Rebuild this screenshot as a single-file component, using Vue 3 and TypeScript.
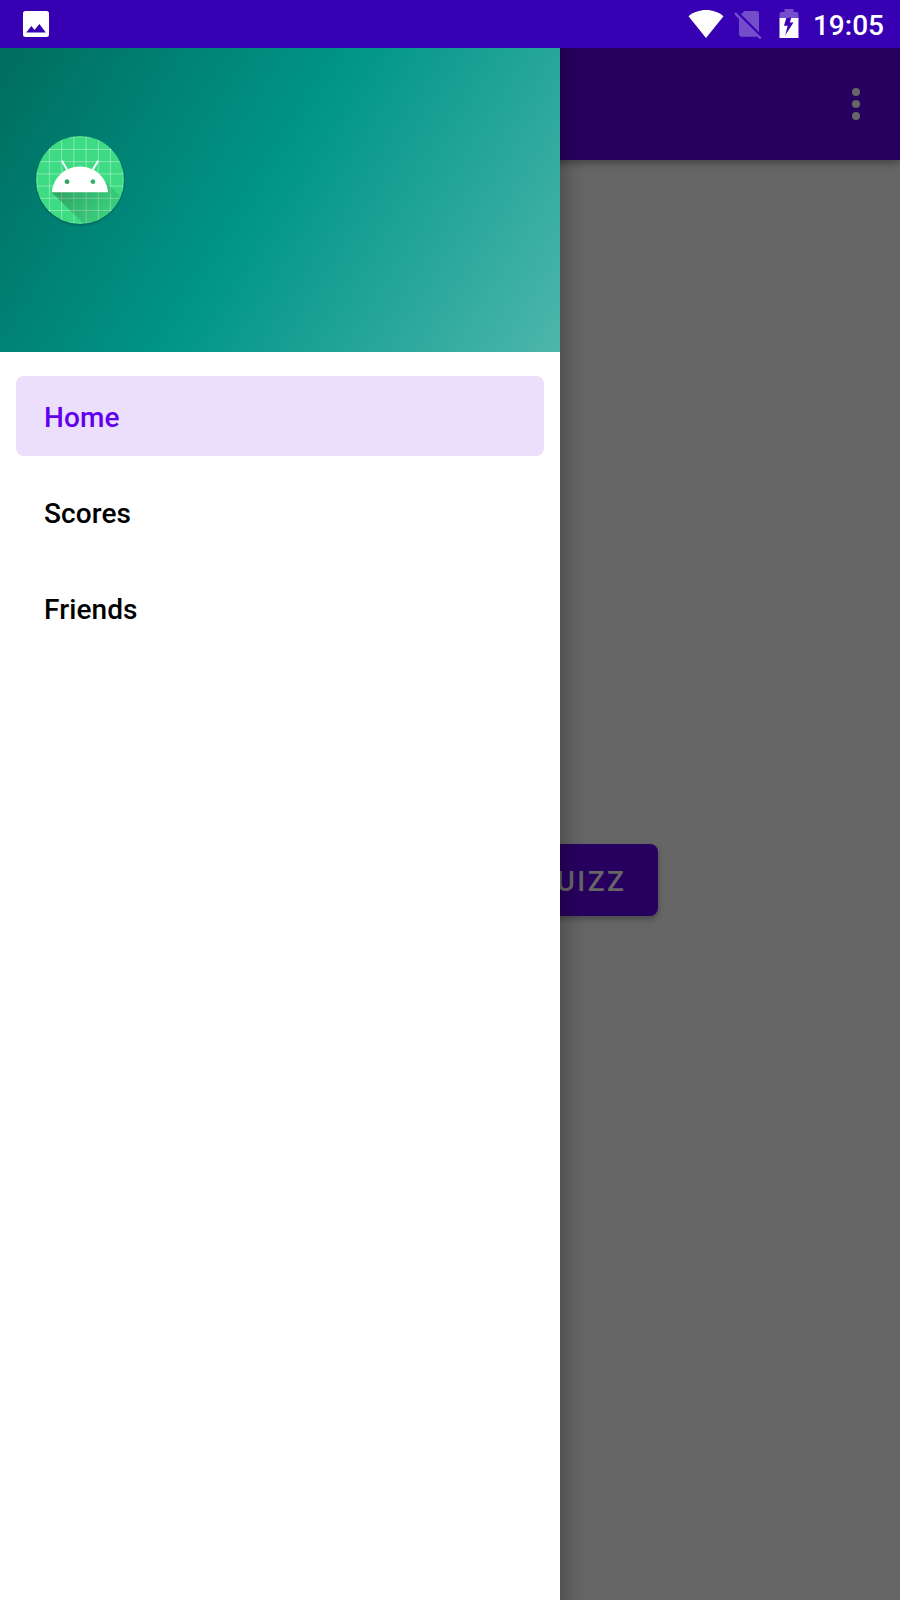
<script setup lang="ts">
interface MenuEntry {
  label: string
  active: boolean
}

const entries: MenuEntry[] = [
  { label: 'Home', active: true },
  { label: 'Scores', active: false },
  { label: 'Friends', active: false },
]

const gridLines: number[] = [19, 29, 39, 49, 59, 69, 79, 89]
const innerLines: number[] = [29, 39, 49, 59, 69, 79]
</script>

<template>
  <div class="screen">
    <header class="status-bar">
      <svg class="picture-icon" viewBox="0 0 26 26">
        <path fill="#fff" fill-rule="evenodd" d="M2.5 0h21A2.5 2.5 0 0 1 26 2.5v21a2.5 2.5 0 0 1-2.5 2.5h-21A2.5 2.5 0 0 1 0 23.5v-21A2.5 2.5 0 0 1 2.5 0zM3.200 21.500h19.600L16.400 13 11.500 19 8.400 15z" />
      </svg>
      <div class="status-right">
        <svg class="wifi-icon" viewBox="0 0 36 28">
          <path fill="#fff" d="M18 28 .5 6.2C5 2.3 11.300 0 18 0s13 2.300 17.500 6.200z" />
        </svg>
        <svg class="sim-icon" viewBox="0 0 28 28">
          <g fill="#fff" opacity=".3">
            <path d="M10.300 0H22.500Q25 0 25 2.500V21.200L7 3.200z" />
            <path d="M1.800 1.300 27.700 26.700 26 28.200 22.700 25.200Q22.200 25.700 21 25.700H7.500Q5 25.700 5 23.300V8L.200 3z" />
          </g>
        </svg>
        <svg class="battery-icon" viewBox="0 0 20 29">
          <path fill="#fff" opacity=".3" d="M5.500 0h9v3H17.500Q19.500 3 19.500 5V9H11.700V8L10.800 9H.500V5Q.500 3 2.500 3h3z" />
          <path fill="#fff" fill-rule="evenodd" d="M.500 9H7.300L5 16.800H8.700L6.200 26.200 14.500 13.500H10.800L12.200 9H19.500V29H.500z" />
        </svg>
        <span class="clock">19:05</span>
      </div>
    </header>

    <main class="stage">
      <section class="page">
        <div class="toolbar">
          <svg class="more-icon" viewBox="0 0 8 32">
            <circle cx="4" cy="4" r="4" />
            <circle cx="4" cy="16" r="4" />
            <circle cx="4" cy="28" r="4" />
          </svg>
        </div>
        <div class="content">
          <button class="quiz-button" type="button">QUIZZ</button>
        </div>
      </section>

      <aside class="drawer">
        <div class="drawer-header">
          <svg class="logo" viewBox="0 0 96 96">
            <defs>
              <clipPath id="logo-round"><circle cx="54" cy="54" r="36" /></clipPath>
              <linearGradient id="long-shadow" gradientUnits="userSpaceOnUse" x1="42.949" y1="49.598" x2="85.848" y2="92.496">
                <stop offset="0" stop-color="#000" stop-opacity=".267" />
                <stop offset="1" stop-color="#000" stop-opacity="0" />
              </linearGradient>
            </defs>
            <g transform="translate(-18 -18) scale(1.2222)">
              <g clip-path="url(#logo-round)">
                <rect width="108" height="108" fill="#3ddc84" />
                <g stroke="#fff" stroke-opacity=".2" stroke-width=".8">
                  <template v-for="n in gridLines" :key="n">
                    <line :x1="n" y1="0" :x2="n" y2="108" />
                    <line x1="0" :y1="n" x2="108" :y2="n" />
                  </template>
                  <template v-for="n in innerLines" :key="n">
                    <line :x1="n" y1="19" :x2="n" y2="89" />
                    <line x1="19" :y1="n" x2="89" :y2="n" />
                  </template>
                </g>
                <path fill="url(#long-shadow)" d="M31,63.928c0,0 6.4,-11 12.1,-13.1c7.2,-2.6 26,-1.4 26,-1.4l38.1,38.1L107,108.928l-32,-1L31,63.928z" />
                <path fill="#fff" d="M65.3,45.828l3.8,-6.6c0.2,-0.4 0.1,-0.9 -0.3,-1.1c-0.4,-0.2 -0.9,-0.1 -1.1,0.3l-3.9,6.7c-6.3,-2.8 -13.4,-2.8 -19.7,0l-3.9,-6.7c-0.2,-0.4 -0.7,-0.5 -1.1,-0.3C38.8,38.328 38.7,38.828 38.9,39.228l3.8,6.6C36.2,49.428 31.7,56.028 31,63.928h46C76.3,56.028 71.8,49.428 65.3,45.828zM43.4,57.328c-0.8,0 -1.5,-0.5 -1.8,-1.2c-0.3,-0.7 -0.1,-1.5 0.4,-2.1c0.5,-0.5 1.4,-0.7 2.1,-0.4c0.7,0.3 1.2,1 1.2,1.8C45.3,56.528 44.5,57.328 43.4,57.328L43.4,57.328zM64.6,57.328c-0.8,0 -1.5,-0.5 -1.8,-1.2s-0.1,-1.5 0.4,-2.1c0.5,-0.5 1.4,-0.7 2.1,-0.4c0.7,0.3 1.2,1 1.2,1.8C66.5,56.528 65.6,57.328 64.6,57.328L64.6,57.328z" />
              </g>
            </g>
          </svg>
        </div>
        <nav class="menu">
          <a v-for="entry in entries" :key="entry.label" class="menu-item" :class="{ active: entry.active }">{{ entry.label }}</a>
        </nav>
      </aside>
    </main>
  </div>
</template>

<style>
body {
  margin: 0;
}
</style>

<style scoped>
.screen {
  display: flex;
  flex-direction: column;
  width: 900px;
  height: 1600px;
  overflow: hidden;
  font-family: Roboto, 'Liberation Sans', sans-serif;
  font-weight: 500;
}

.status-bar {
  position: relative;
  z-index: 2;
  display: flex;
  justify-content: space-between;
  align-items: center;
  flex: none;
  box-sizing: border-box;
  height: 48px;
  padding: 0 16px 0 23px;
  background: #3700b3;
}

.picture-icon {
  width: 26px;
  height: 26px;
}

.status-right {
  display: flex;
  align-items: center;
}

.wifi-icon {
  width: 36px;
  height: 28px;
  margin-right: 10px;
}

.sim-icon {
  width: 28px;
  height: 28px;
  margin: 2px 17px 0 0;
  overflow: visible;
}

.battery-icon {
  width: 20px;
  height: 29px;
  margin: 0 14px 1px 0;
}

.clock {
  height: 48px;
  box-sizing: border-box;
  padding-top: 1px;
  color: #fff;
  font-size: 28px;
  line-height: 50px;
}

.stage {
  display: grid;
  grid-template: 1552px / 900px;
}

.page,
.drawer {
  grid-area: 1 / 1;
}

.page {
  display: flex;
  flex-direction: column;
  background: #666;
}

.toolbar {
  display: flex;
  justify-content: flex-end;
  align-items: center;
  flex: none;
  height: 112px;
  padding-right: 40px;
  background: #27005f;
  box-shadow: 0 3px 8px rgba(0, 0, 0, 0.35);
}

.more-icon {
  width: 8px;
  height: 32px;
  fill: #666;
}

.content {
  display: flex;
  flex: 1;
  align-items: center;
  justify-content: center;
}

.quiz-button {
  width: 416px;
  height: 72px;
  box-sizing: border-box;
  padding: 2px 31.5px 0;
  border: 0;
  border-radius: 8px;
  background: #27005f;
  box-shadow: 0 3px 6px rgba(0, 0, 0, 0.3);
  color: #666;
  font: inherit;
  font-size: 28px;
  letter-spacing: 2.5px;
  text-align: right;
}

.drawer {
  position: relative;
  z-index: 1;
  width: 560px;
  background: #fff;
}

.drawer::after {
  content: '';
  position: absolute;
  top: 0;
  bottom: 0;
  left: 100%;
  width: 28px;
  background: linear-gradient(90deg, rgba(0, 0, 0, 0.2), rgba(0, 0, 0, 0.08) 40%, rgba(0, 0, 0, 0.02) 75%, transparent);
}

.drawer-header {
  box-sizing: border-box;
  height: 304px;
  padding: 84px 32px 0;
  background: linear-gradient(122.15deg, #00695c, #009688 50%, #4db6ac) 0 -48px / 560px 352px no-repeat;
}

.logo {
  display: block;
  width: 96px;
  height: 96px;
  filter: drop-shadow(0 1px 1px rgba(0, 0, 0, 0.3));
}

.menu {
  display: flex;
  flex-direction: column;
  gap: 16px;
  padding: 24px 16px;
}

.menu-item {
  height: 80px;
  padding: 1px 28px 0;
  box-sizing: border-box;
  border-radius: 8px;
  color: #000;
  font-size: 28px;
  line-height: 82px;
  letter-spacing: 0.1px;
}

.menu-item.active {
  background: #ecdffc;
  color: #6200ee;
}
</style>
